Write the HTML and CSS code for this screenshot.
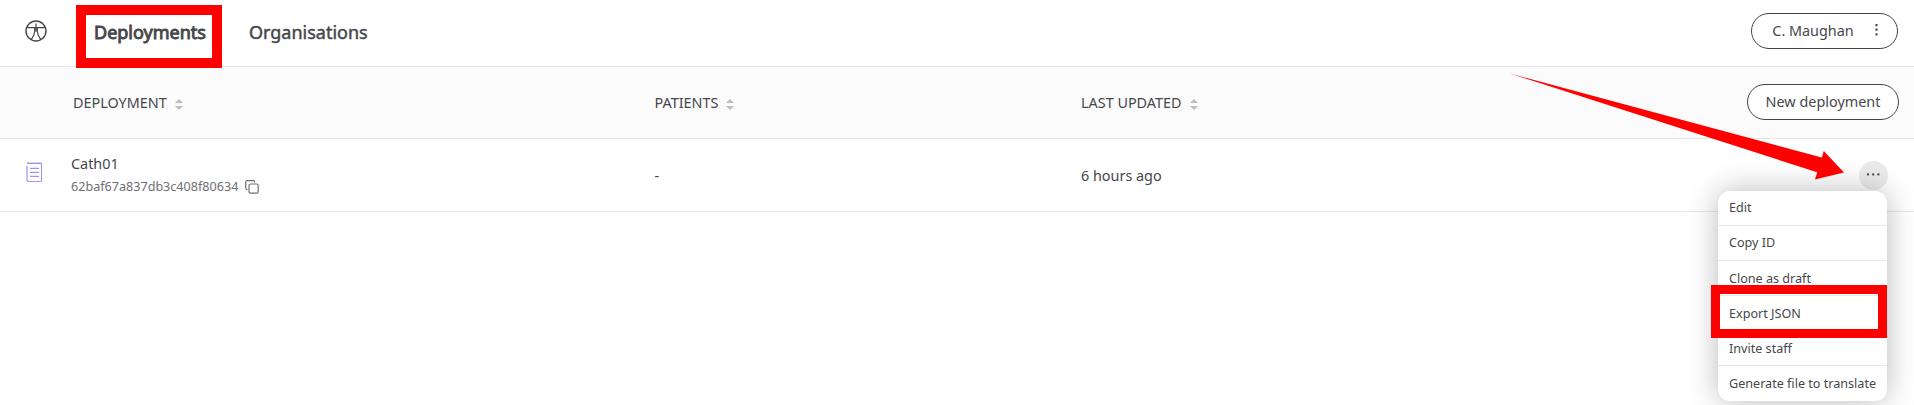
FILE: index.html
```html
<!DOCTYPE html>
<html lang="en">
<head>
<meta charset="utf-8">
<title>Deployments</title>
<link rel="stylesheet" href="styles.css">
</head>
<body>
<header class="topbar">
  <svg class="logo" viewBox="0 0 22 22" fill="none" stroke="#46474c" stroke-width="1.4">
    <circle cx="11" cy="11" r="10"/>
    <path d="M1.5 7.7H20.5M11 3.5V11.5M9.7 7.7V11.5L8.8 15L6.3 19.6M12.3 7.7V11.5L13.2 15L15.7 19.6" stroke-width="1.2"/>
  </svg>
  <nav class="nav">
    <a class="nav-link active">Deployments</a>
    <a class="nav-link">Organisations</a>
  </nav>
  <button class="pill user">C. Maughan
    <svg class="kebab" viewBox="0 0 3 13" fill="#46474c"><rect y="0" x=".4" width="2.2" height="2.2" rx=".6"/><rect y="4.6" x=".4" width="2.2" height="2.2" rx=".6"/><rect y="9.2" x=".4" width="2.2" height="2.2" rx=".6"/></svg>
  </button>
</header>
<main>
  <div class="row head">
    <div></div>
    <div class="cell name-head">DEPLOYMENT <svg class="sort" viewBox="0 0 8 11"><path d="M0 4L4 0L8 4ZM0 7H8L4 11Z"/></svg></div>
    <div class="cell">PATIENTS <svg class="sort" viewBox="0 0 8 11"><path d="M0 4L4 0L8 4ZM0 7H8L4 11Z"/></svg></div>
    <div class="cell">LAST UPDATED <svg class="sort" viewBox="0 0 8 11"><path d="M0 4L4 0L8 4ZM0 7H8L4 11Z"/></svg></div>
    <button class="pill new">New deployment</button>
  </div>
  <div class="row item">
    <svg class="doc" viewBox="0 0 16 20" fill="none">
      <path d="M1 0.5H15.5V19M4 6H13M4 10H13M4 14H13" stroke="#d9cffc" stroke-width="1"/>
      <path d="M1 4V19" stroke="#c6b8fb" stroke-width="2"/>
      <path d="M1 1.5H15.5V19.5H1M4 6.5H13M4 10.5H13M4 14.5H13" stroke="#a48ff5"/>
    </svg>
    <div class="name">
      <div class="title">Cath01</div>
      <div class="id">62baf67a837db3c408f80634
        <svg class="copy" viewBox="0 0 14 14" fill="none" stroke="#6f7074" stroke-width="1.2"><rect x="4" y="4" width="9.2" height="9.2" rx="1.5"/><path d="M2.5 9.6H2.2A1.5 1.5 0 0 1 .7 8.1V2.2A1.5 1.5 0 0 1 2.2.7H8.1A1.5 1.5 0 0 1 9.6 2.2V2.5"/></svg>
      </div>
    </div>
    <div class="cell">-</div>
    <div class="cell">6 hours ago</div>
    <div class="actions">
      <button class="more"><svg viewBox="0 0 13 3" fill="#46474c"><rect x="0" y=".4" width="2" height="2"/><rect x="5.2" y=".4" width="2" height="2"/><rect x="10.4" y=".4" width="2" height="2"/></svg></button>
      <ul class="menu">
        <li>Edit</li>
        <li>Copy ID</li>
        <li>Clone as draft</li>
        <li>Export JSON</li>
        <li>Invite staff</li>
        <li>Generate file to translate</li>
      </ul>
    </div>
  </div>
</main>
<div class="mark mark-nav"></div>
<div class="mark mark-export"></div>
<svg class="arrow" viewBox="0 0 336 108"><path d="M0 .3L312.8 84.6L314.8 78L335 99.5L306 106.5L308.2 99.3Z" fill="#f00"/></svg>
</body>
</html>
```
FILE: styles.css
```css
* { box-sizing: border-box; }
body {
  margin: 0;
  height: 405px;
  overflow: hidden;
  position: relative;
  background: #fff;
  color: #46474c;
  font: 14.4px/20px "Noto Sans", sans-serif;
}
.topbar {
  display: flex;
  align-items: center;
  height: 67px;
  padding: 0 16px 4px 25px;
  border-bottom: 1px solid #e8e8e8;
}
.logo { width: 22px; height: 22px; margin-top: -1px; }
.nav { display: flex; gap: 43px; margin-left: 47px; flex: 1; padding-top: 2px; }
.nav-link {
  font-size: 18px;
  line-height: 24px;
  -webkit-text-stroke: .45px currentColor;
}
.nav-link.active { -webkit-text-stroke-width: .9px; }
.pill {
  display: flex;
  align-items: center;
  justify-content: center;
  height: 36px;
  border: 1px solid #424347;
  border-radius: 18px;
  background: #fff;
  color: inherit;
  font: inherit;
  padding: 0;
}
.user { width: 147px; gap: 21px; padding-left: 1px; }
.kebab { width: 3px; height: 13px; margin-top: -1px; }
.row {
  display: grid;
  grid-template-columns: 46px 583.5px 426.5px 1fr auto;
  align-items: center;
  padding: 0 15px 0 25px;
  border-bottom: 1px solid #e8e8e8;
}
.head { height: 72px; background: #fbfbfb; }
.cell { display: flex; align-items: center; }
.name-head { padding-left: 2px; }
.sort { width: 8px; height: 11px; margin: 3px 0 0 8px; fill: #bdbdbd; }
.new { width: 152px; margin-bottom: 1px; }
.item { height: 73px; font-size: 14.4px; }
.item .cell { padding-top: 2px; }
.doc { width: 16px; height: 20px; margin: -6px 0 0 1px; }
.id {
  display: flex;
  align-items: center;
  gap: 7px;
  margin-top: 3px;
  color: #6f7074;
  font-size: 12.6px;
}
.copy { width: 14px; height: 14px; }
.actions { position: relative; margin-right: 11px; }
.more {
  display: flex;
  align-items: center;
  justify-content: center;
  width: 29px;
  height: 29px;
  padding: 0 1px 2px 0;
  border: 0;
  border-radius: 50%;
  background: #ebebeb;
}
.more svg { width: 13px; height: 3px; }
.menu {
  position: absolute;
  top: 30px;
  right: 1px;
  width: 169px;
  margin: 0;
  padding: 0;
  list-style: none;
  background: #fff;
  border-radius: 12px;
  box-shadow: 0 0 30px rgba(0, 0, 0, .28);
  font-size: 12.6px;
}
.menu li { height: 35.2px; line-height: 33.6px; padding-left: 11px; border-bottom: 1px solid #e8e8e8; white-space: nowrap; }
.menu li:nth-child(n+3) { padding-top: .8px; }
.menu li:last-child { border-bottom: 0; height: 34.2px; }
.mark { position: absolute; border: 10px solid #f00; }
.mark-nav { left: 76px; top: 5px; width: 146px; height: 63px; }
.mark-export { left: 1710.5px; top: 285px; width: 176.5px; height: 53px; border-width: 9px; }
.arrow { position: absolute; left: 1509px; top: 73px; width: 336px; height: 108px; }
```
